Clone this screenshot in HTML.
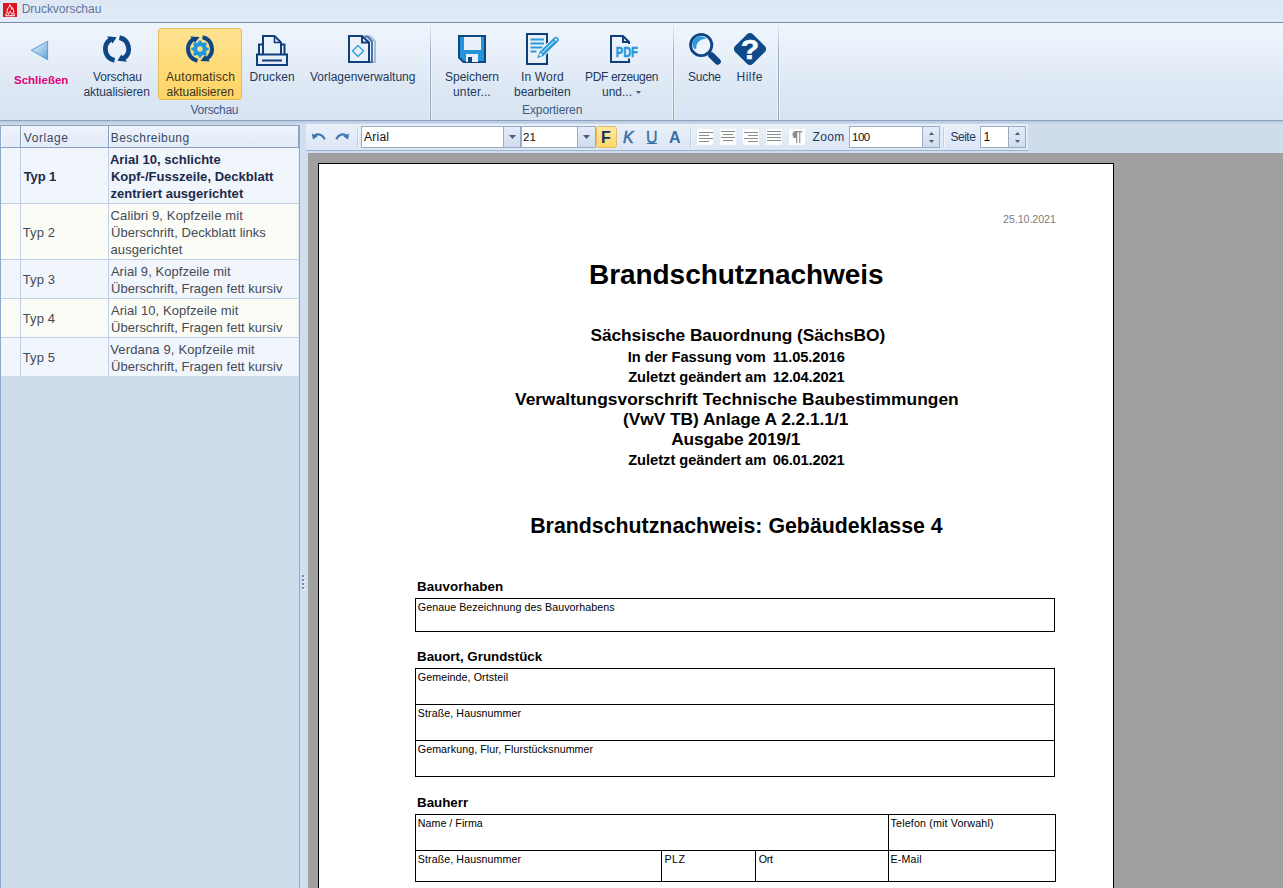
<!DOCTYPE html>
<html lang="de">
<head>
<meta charset="utf-8">
<title>Druckvorschau</title>
<style>
*{box-sizing:border-box;margin:0;padding:0}
html,body{width:1283px;height:888px;overflow:hidden}
body{position:relative;background:#cfdcec;font-family:"Liberation Sans",sans-serif;font-size:12px;color:#1e395b}
.abs{position:absolute}
.t{position:absolute;white-space:nowrap;line-height:1}
/* title bar */
#titlebar{left:0;top:0;width:1283px;height:22px;background:linear-gradient(#dee8f5,#e1ebf7)}
#titleline{left:0;top:22px;width:1283px;height:3px;background:linear-gradient(#768cab 0,#768cab 33.300%,#a9bbd4 33.300%,#a9bbd4 66.600%,#f4f9fe 66.600%)}
#apptitle{left:22px;top:2px;font-size:12.4px;color:#5d6f91;line-height:14px}
/* ribbon */
#ribbon{left:0;top:23px;width:1283px;height:97px;background:linear-gradient(#eff5fc 0,#e7eff9 35%,#dce7f4 70%,#d9e4f3 100%)}
#ribline{left:0;top:120px;width:1283px;height:1px;background:#8da2c0}
#ribshadow{left:0;top:121px;width:1283px;height:3px;background:linear-gradient(#b9c9de,#cbd9ea)}
.gsep{width:1px;top:25px;height:95px;background:linear-gradient(rgba(146,163,187,.15),rgba(146,163,187,.9) 30%,#92a3bb)}
.gsepl{width:3px;top:25px;height:95px;background:rgba(240,246,253,.8)}
.rl{position:absolute;text-align:center;white-space:nowrap;line-height:15px;font-size:12px;color:#1e395b}
.gl{position:absolute;text-align:center;white-space:nowrap;line-height:15px;font-size:12px;color:#3b5a82}
#btnauto{left:158px;top:28px;width:84px;height:72px;border:1px solid #e3bd5a;border-radius:3px;background:linear-gradient(#ffe391 0,#ffdc7c 45%,#ffd465 100%)}
/* left panel */
#grid{left:1px;top:125px;width:298px;height:252px;background:#c9d8ea}
.cell{position:absolute;overflow:hidden}
.hd{background:linear-gradient(#eef3fc,#e4ecf9);box-shadow:inset 1px 1px 0 #f6f9fe}
.r1{background:#f1f5fc}
.r2{background:#fcfcf7}
.gt{position:absolute;white-space:nowrap;line-height:17px;font-size:12px;color:#3c3c46}
/* toolbar */
#tbar{left:306px;top:124px;width:722px;height:27px;background:linear-gradient(#e9f0fa,#dbe6f5)}
#tbarline{left:306px;top:150px;width:722px;height:1px;background:#9db2d0}
#splitter{left:300px;top:124px;width:8px;height:764px;background:#d1deef}
#gray{left:308px;top:153px;width:975px;height:735px;background:#a0a0a0}
.inp{position:absolute;background:#fff;border:1px solid #9aabc4}
.dd{position:absolute;border:1px solid #9aabc4;background:linear-gradient(#e4ecf8,#d0dcee)}
.tsep{position:absolute;width:1px;top:127px;height:20px;background:#c3d0e4;box-shadow:1px 0 0 #f0f5fc}
.ico16{position:absolute;width:16px;height:16px;background:#fdfefe;top:129px}
/* page */
#page{left:318px;top:163px;width:796px;height:730px;background:#fff;border:1px solid #000}
.d{position:absolute;white-space:nowrap;color:#000;font-weight:bold;line-height:1}
.s{position:absolute;white-space:nowrap;color:#000;font-size:10.67px;line-height:1}
.box{position:absolute;border:1px solid #000}
.ln{position:absolute;background:#000}
</style>
</head>
<body>
<!-- TITLE BAR -->
<div class="abs" id="titlebar"></div>
<div class="abs" id="titleline"></div>
<svg class="abs" style="left:3px;top:3px" width="14" height="14" viewBox="0 0 14 14"><rect width="14" height="14" fill="#dc1220"/><path d="M6.700 1.400C7.500 3.400 3.900 5.200 3.900 8.200c0 1.500.8 2.600 2 3.100-.3-1.400.3-2.500 1.400-3.100.1 1.300 1.400 1.700 1.300 3.200 1.500-.6 2.300-2 2.100-3.600-.2-1.300-1.100-2-1-3.100-.7.400-1.100 1-1.100 1.800C8.400 5.100 8.200 2.800 6.700 1.400z" fill="none" stroke="#fff" stroke-width="1" stroke-linejoin="round"/><path d="M3 10.400v2.300h8.200v-2.300" fill="none" stroke="#fff" stroke-width="1.100"/></svg>

<!-- RIBBON -->
<div class="abs" id="ribbon"></div>
<div class="abs" id="ribline"></div>
<div class="abs" id="ribshadow"></div>
<div class="abs gsepl" style="left:429px"></div><div class="abs gsep" style="left:430px"></div><div class="abs gsepl" style="left:672px"></div><div class="abs gsep" style="left:673px"></div><div class="abs gsepl" style="left:777px"></div><div class="abs gsep" style="left:778px"></div>
<div class="abs" id="btnauto"></div>

<svg class="abs" style="left:24px;top:33px" width="32" height="32" viewBox="0 0 32 32"><defs><linearGradient id="tg" x1="0" y1="0" x2="1" y2="1"><stop offset="0" stop-color="#e3f0fb"/><stop offset=".5" stop-color="#a9cdee"/><stop offset="1" stop-color="#5f9fd8"/></linearGradient></defs><path d="M7.300 17.300 23.600 8.200V26.700z" fill="url(#tg)" stroke="#5c9ad3" stroke-width="1" stroke-linejoin="round"/></svg>
<svg class="abs" style="left:101px;top:33px" width="32" height="32" viewBox="0 0 32 32"><path d="M13.09 29.69A14 14 0 0 1 7.38 4.97L6.03 3.23L15.59 4.36L11.63 10.41L10.27 8.67A9.3 9.3 0 0 0 14.07 25.10zM18.91 2.31A14 14 0 0 1 24.62 27.03L25.97 28.77L16.41 27.64L20.37 21.59L21.73 23.33A9.3 9.3 0 0 0 17.93 6.90z" fill="#0e4583"/></svg>
<svg class="abs" style="left:184px;top:33px" width="32" height="32" viewBox="0 0 32 32"><path d="M13.09 29.69A14 14 0 0 1 7.38 4.97L6.21 3.47L15.58 4.06L11.07 9.70L9.90 8.20A9.9 9.9 0 0 0 13.94 25.68zM18.91 2.31A14 14 0 0 1 24.62 27.03L25.79 28.53L16.42 27.94L20.93 22.30L22.10 23.80A9.9 9.9 0 0 0 18.06 6.32z" fill="#0e4583"/><path d="M22.71 17.61L24.59 17.36L24.59 14.64L22.71 14.39L21.88 12.39L23.04 10.89L21.11 8.96L19.61 10.12L17.61 9.29L17.36 7.41L14.64 7.41L14.39 9.29L12.39 10.12L10.89 8.96L8.96 10.89L10.12 12.39L9.29 14.39L7.41 14.64L7.41 17.36L9.29 17.61L10.12 19.61L8.96 21.11L10.89 23.04L12.39 21.88L14.39 22.71L14.64 24.59L17.36 24.59L17.61 22.71L19.61 21.88L21.11 23.04L23.04 21.11L21.88 19.61zM18.7 16A2.7 2.7 0 1 0 13.3 16A2.7 2.7 0 1 0 18.7 16z" fill="#1f97dc" fill-rule="evenodd"/></svg>
<svg class="abs" style="left:256px;top:34px" width="32" height="32" viewBox="0 0 32 32"><path d="M7 20V2h11.500L25 8.500V20" fill="none" stroke="#0e3f7c" stroke-width="2"/><path d="M18.500 2v6.500h6.500" fill="none" stroke="#0e3f7c" stroke-width="1.600"/><path d="M3 20V10.500h4M28.500 20V10.500h-3.500" fill="none" stroke="#0e3f7c" stroke-width="2"/><rect x="1" y="20.500" width="30" height="10.500" fill="none" stroke="#0e3f7c" stroke-width="2"/><rect x="6" y="25.500" width="20" height="2" fill="#0e3f7c"/></svg>
<svg class="abs" style="left:348px;top:35px" width="29" height="29" viewBox="0 0 29 29"><path d="M19.500 1.500h3l4.500 5v20.500h-6" fill="none" stroke="#a9bcd8" stroke-width="2"/><path d="M16.500 1.500h3l4.500 5v20.500h-6" fill="none" stroke="#4d72a3" stroke-width="2"/><path d="M1 1h13l7 6.500V27H1z" fill="#eaf1fa" stroke="#0e3f7c" stroke-width="2"/><path d="M14 1v6.500h7" fill="none" stroke="#0e3f7c" stroke-width="2"/><path d="M10 10.500 15.500 16 10 21.500 4.500 16z" fill="none" stroke="#2aa0dc" stroke-width="1.400"/></svg>
<svg class="abs" style="left:458px;top:35px" width="28" height="28" viewBox="0 0 28 28"><path d="M1 1h26v26H5.500L1 22.500z" fill="#2493d8" stroke="#0e4583" stroke-width="2"/><rect x="6" y="2" width="17" height="13" fill="#e9f0fa"/><rect x="8" y="19" width="12" height="8" fill="#e9f0fa"/><rect x="10" y="22" width="4" height="5" fill="#0e4583"/></svg>
<svg class="abs" style="left:526px;top:33px" width="34" height="33" viewBox="0 0 34 33"><rect x="1" y="1" width="20" height="30" fill="#e9f0fa" stroke="#0e3f7c" stroke-width="2"/><path d="M4.500 6.500h13.500M4.500 10.500h13.500M4.500 14.500h12M4.500 18.500h6" stroke="#2a9bd8" stroke-width="1.800" fill="none"/><g transform="translate(10.300,26) rotate(-44.500)"><path d="M0 0 7 -3.300H27.500a3.300 3.300 0 0 1 0 6.600H7z" fill="#2a9bd8" stroke="#eaf1fa" stroke-width="1"/><path d="M8 -0.300H25" stroke="#b5dcf3" stroke-width="1.100"/><circle cx="6" cy="0" r="1.400" fill="#eaf1fa"/><circle cx="27.600" cy="0" r="1.300" fill="#eaf1fa"/></g></svg>
<svg class="abs" style="left:610px;top:35px" width="29" height="29" viewBox="0 0 29 29"><path d="M19 9V7L13 1H1v26h18v-3.500" fill="none" stroke="#0e3f7c" stroke-width="2"/><path d="M13 1v6h6" fill="none" stroke="#0e3f7c" stroke-width="2"/><text x="5.800" y="21.600" font-family="Liberation Sans,sans-serif" font-weight="bold" font-size="14" fill="#1f97dc" stroke="#1f97dc" stroke-width=".500" textLength="22" lengthAdjust="spacingAndGlyphs">PDF</text></svg>
<svg class="abs" style="left:689px;top:33px" width="33" height="33" viewBox="0 0 33 33"><circle cx="12.200" cy="12" r="10.600" fill="#eef3fb" stroke="#0e4583" stroke-width="2.800"/><path d="M5.300 16A7.400 7.400 0 0 1 17.300 6 8.800 8.800 0 0 0 7.300 15.400z" fill="#2a9bd8"/><path d="M22.300 22.300 28.600 28.600" stroke="#0e4583" stroke-width="6.400" stroke-linecap="round"/></svg>
<svg class="abs" style="left:734px;top:33px" width="32" height="32" viewBox="0 0 32 32"><rect x="3.400" y="3.400" width="25.200" height="25.200" rx="4.200" transform="rotate(45 16 16)" fill="#0e4a8a"/><text transform="translate(16.100 26.300) scale(1.120 1)" text-anchor="middle" font-family="Liberation Sans,sans-serif" font-weight="bold" font-size="27" fill="#fff" stroke="#fff" stroke-width=".500">?</text></svg>
<svg class="abs" style="left:636px;top:91px" width="5" height="3" viewBox="0 0 5 3"><path d="M0 0h5L2.500 3z" fill="#4b5b7d"/></svg>
<!-- LEFT GRID -->
<div class="abs" style="left:0;top:125px;width:300px;height:23px;background:#8a9fbf"></div>
<div class="abs" style="left:0;top:148px;width:299px;height:228px;background:#bfcfe7"></div>
<div class="abs" style="left:0;top:125px;width:1px;height:763px;background:#8fa7ca"></div>
<div class="abs" style="left:299px;top:125px;width:1px;height:763px;background:#8fa9cf"></div>
<div class="cell hd" style="left:1px;top:126px;width:19px;height:21px"></div>
<div class="cell hd" style="left:21px;top:126px;width:87px;height:21px"></div>
<div class="cell hd" style="left:109px;top:126px;width:189px;height:21px"></div>
<div class="abs" style="left:298px;top:148px;width:1px;height:228px;background:#dfe8f5"></div>
<div class="cell r1" style="left:1px;top:148px;width:19px;height:55px"></div>
<div class="cell r1" style="left:21px;top:148px;width:87px;height:55px"></div>
<div class="cell r1" style="left:109px;top:148px;width:189px;height:55px"></div>
<div class="cell r2" style="left:1px;top:204px;width:19px;height:55px"></div>
<div class="cell r2" style="left:21px;top:204px;width:87px;height:55px"></div>
<div class="cell r2" style="left:109px;top:204px;width:189px;height:55px"></div>
<div class="cell r1" style="left:1px;top:260px;width:19px;height:38px"></div>
<div class="cell r1" style="left:21px;top:260px;width:87px;height:38px"></div>
<div class="cell r1" style="left:109px;top:260px;width:189px;height:38px"></div>
<div class="cell r2" style="left:1px;top:299px;width:19px;height:38px"></div>
<div class="cell r2" style="left:21px;top:299px;width:87px;height:38px"></div>
<div class="cell r2" style="left:109px;top:299px;width:189px;height:38px"></div>
<div class="cell r1" style="left:1px;top:338px;width:19px;height:38px"></div>
<div class="cell r1" style="left:21px;top:338px;width:87px;height:38px"></div>
<div class="cell r1" style="left:109px;top:338px;width:189px;height:38px"></div>

<!-- TOOLBAR -->
<div class="abs" id="splitter"></div>
<div class="abs" style="left:303px;top:576px;width:2px;height:2px;background:#eef4fc"></div><div class="abs" style="left:302px;top:575px;width:2px;height:2px;background:#7a8db0"></div><div class="abs" style="left:303px;top:580px;width:2px;height:2px;background:#eef4fc"></div><div class="abs" style="left:302px;top:579px;width:2px;height:2px;background:#7a8db0"></div><div class="abs" style="left:303px;top:584px;width:2px;height:2px;background:#eef4fc"></div><div class="abs" style="left:302px;top:583px;width:2px;height:2px;background:#7a8db0"></div><div class="abs" style="left:303px;top:588px;width:2px;height:2px;background:#eef4fc"></div><div class="abs" style="left:302px;top:587px;width:2px;height:2px;background:#7a8db0"></div>
<div class="abs" id="tbar"></div>
<div class="abs" id="tbarline"></div>
<div class="tsep" style="left:357px"></div><div class="tsep" style="left:690px"></div><div class="tsep" style="left:943px"></div>
<div class="inp" style="left:361px;top:126px;width:160px;height:22px"></div>
<div class="dd" style="left:503px;top:126px;width:18px;height:22px"></div><svg class="abs" style="left:509px;top:135px" width="7" height="4" viewBox="0 0 7 4"><path d="M0 0h7L3.500 4z" fill="#4b5b7d"/></svg>
<div class="inp" style="left:521px;top:126px;width:75px;height:22px"></div>
<div class="dd" style="left:577px;top:126px;width:19px;height:22px"></div><svg class="abs" style="left:583px;top:135px" width="7" height="4" viewBox="0 0 7 4"><path d="M0 0h7L3.500 4z" fill="#4b5b7d"/></svg>
<div class="abs" style="left:596px;top:126px;width:21px;height:22px;border:1px solid #e3bd5a;border-radius:3px;background:linear-gradient(#ffe9a3,#ffd66b)"></div>
<div class="abs" style="left:647px;top:143px;width:10px;height:1px;background:#3a6ea5"></div>
<div class="ico16" style="left:697px"></div><div class="abs" style="left:699px;top:132px;width:14px;height:1px;background:#8c8c8c"></div><div class="abs" style="left:699px;top:135px;width:10px;height:1px;background:#8c8c8c"></div><div class="abs" style="left:699px;top:138px;width:14px;height:1px;background:#8c8c8c"></div><div class="abs" style="left:699px;top:141px;width:10px;height:1px;background:#8c8c8c"></div>
<div class="ico16" style="left:720px"></div><div class="abs" style="left:721px;top:131px;width:14px;height:1px;background:#8c8c8c"></div><div class="abs" style="left:723px;top:134px;width:10px;height:1px;background:#8c8c8c"></div><div class="abs" style="left:721px;top:137px;width:14px;height:1px;background:#8c8c8c"></div><div class="abs" style="left:723px;top:140px;width:10px;height:1px;background:#8c8c8c"></div>
<div class="ico16" style="left:743px"></div><div class="abs" style="left:744px;top:132px;width:14px;height:1px;background:#8c8c8c"></div><div class="abs" style="left:748px;top:135px;width:10px;height:1px;background:#8c8c8c"></div><div class="abs" style="left:744px;top:138px;width:14px;height:1px;background:#8c8c8c"></div><div class="abs" style="left:748px;top:141px;width:10px;height:1px;background:#8c8c8c"></div>
<div class="ico16" style="left:766px"></div><div class="abs" style="left:767px;top:131px;width:14px;height:1px;background:#8c8c8c"></div><div class="abs" style="left:767px;top:134px;width:14px;height:1px;background:#8c8c8c"></div><div class="abs" style="left:767px;top:137px;width:14px;height:1px;background:#8c8c8c"></div><div class="abs" style="left:767px;top:140px;width:14px;height:1px;background:#8c8c8c"></div>
<div class="ico16" style="left:789px"></div><svg class="abs" style="left:789px;top:129px" width="16" height="16" viewBox="0 0 16 16"><path d="M7 2H13.300V3.200H11.300V14H10.200V3.200H8.300V14H7.200V9.200A3.600 3.600 0 0 1 7 2z" fill="#8c8c8c"/></svg>
<div class="inp" style="left:849px;top:126px;width:91px;height:22px"></div>
<div class="dd" style="left:922px;top:126px;width:18px;height:22px"></div><svg class="abs" style="left:929px;top:132px" width="5" height="3" viewBox="0 0 5 3"><path d="M0 3h5L2.500 0z" fill="#4b5b7d"/></svg><svg class="abs" style="left:929px;top:140px" width="5" height="3" viewBox="0 0 5 3"><path d="M0 0h5L2.500 3z" fill="#4b5b7d"/></svg>
<div class="inp" style="left:980px;top:126px;width:46px;height:22px"></div>
<div class="dd" style="left:1008px;top:126px;width:18px;height:22px"></div><svg class="abs" style="left:1015px;top:132px" width="5" height="3" viewBox="0 0 5 3"><path d="M0 3h5L2.500 0z" fill="#4b5b7d"/></svg><svg class="abs" style="left:1015px;top:140px" width="5" height="3" viewBox="0 0 5 3"><path d="M0 0h5L2.500 3z" fill="#4b5b7d"/></svg>
<svg class="abs" style="left:311px;top:131px" width="16" height="11" viewBox="0 0 16 11"><path d="M0.800 2.400 1.900 8.400 6.600 5.600z" fill="#3f76ae"/><path d="M3.500 4.600C7.500 2.300 11.500 3.300 13.800 8.300" fill="none" stroke="#3f76ae" stroke-width="2.100"/></svg>
<svg class="abs" style="left:334px;top:131px" width="16" height="11" viewBox="0 0 16 11"><path d="M15.200 2.400 14.100 8.400 9.400 5.600z" fill="#3f76ae"/><path d="M12.500 4.600C8.500 2.300 4.500 3.300 2.200 8.300" fill="none" stroke="#3f76ae" stroke-width="2.100"/></svg>

<!-- PREVIEW -->
<div class="abs" id="gray"></div>
<div class="abs" id="page"></div>
<div class="ln" style="left:415px;top:598px;width:640px;height:1px"></div>
<div class="ln" style="left:415px;top:631px;width:640px;height:1px"></div>
<div class="ln" style="left:415px;top:598px;width:1px;height:34px"></div>
<div class="ln" style="left:1054px;top:598px;width:1px;height:34px"></div>
<div class="ln" style="left:415px;top:668px;width:640px;height:1px"></div>
<div class="ln" style="left:415px;top:704px;width:640px;height:1px"></div>
<div class="ln" style="left:415px;top:740px;width:640px;height:1px"></div>
<div class="ln" style="left:415px;top:776px;width:640px;height:1px"></div>
<div class="ln" style="left:415px;top:668px;width:1px;height:109px"></div>
<div class="ln" style="left:1054px;top:668px;width:1px;height:109px"></div>
<div class="ln" style="left:415px;top:814px;width:641px;height:1px"></div>
<div class="ln" style="left:415px;top:850px;width:641px;height:1px"></div>
<div class="ln" style="left:415px;top:881px;width:641px;height:1px"></div>
<div class="ln" style="left:415px;top:814px;width:1px;height:68px"></div>
<div class="ln" style="left:1055px;top:814px;width:1px;height:68px"></div>
<div class="ln" style="left:888px;top:814px;width:1px;height:68px"></div>
<div class="ln" style="left:661px;top:850px;width:1px;height:32px"></div>
<div class="ln" style="left:755px;top:850px;width:1px;height:32px"></div>
<div class="t" style="left:589px;top:261px;font-size:28px;color:#000;font-weight:bold;letter-spacing:-0.056px">Brandschutznachweis</div>
<div class="t" style="left:590.4px;top:327px;font-size:17.33px;color:#000;font-weight:bold;letter-spacing:-0.06px">Sächsische Bauordnung (SächsBO)</div>
<div class="t" style="left:627.7px;top:350px;font-size:14.67px;color:#000;font-weight:bold;letter-spacing:-0.024px">In der Fassung vom</div>
<div class="t" style="left:772.75px;top:350px;font-size:14.67px;color:#000;font-weight:bold;letter-spacing:-0.056px">11.05.2016</div>
<div class="t" style="left:628.2px;top:370px;font-size:14.67px;color:#000;font-weight:bold;letter-spacing:-0.022px">Zuletzt geändert am</div>
<div class="t" style="left:772.75px;top:370px;font-size:14.67px;color:#000;font-weight:bold;letter-spacing:-0.167px">12.04.2021</div>
<div class="t" style="left:515px;top:391px;font-size:17.33px;color:#000;font-weight:bold;letter-spacing:0.043px">Verwaltungsvorschrift Technische Baubestimmungen</div>
<div class="t" style="left:623px;top:411px;font-size:17.33px;color:#000;font-weight:bold;letter-spacing:-0.038px">(VwV TB) Anlage A 2.2.1.1/1</div>
<div class="t" style="left:671.2px;top:431px;font-size:17.33px;color:#000;font-weight:bold;letter-spacing:-0.139px">Ausgabe 2019/1</div>
<div class="t" style="left:628.2px;top:453px;font-size:14.67px;color:#000;font-weight:bold;letter-spacing:-0.022px">Zuletzt geändert am</div>
<div class="t" style="left:772.75px;top:453px;font-size:14.67px;color:#000;font-weight:bold;letter-spacing:-0.167px">06.01.2021</div>
<div class="t" style="left:530.2px;top:516px;font-size:21.33px;color:#000;font-weight:bold">Brandschutznachweis: Gebäudeklasse 4</div>
<div class="t" style="left:417px;top:580px;font-size:13.33px;color:#000;font-weight:bold;letter-spacing:0.1px">Bauvorhaben</div>
<div class="t" style="left:417px;top:650px;font-size:13.33px;color:#000;font-weight:bold">Bauort, Grundstück</div>
<div class="t" style="left:417px;top:796px;font-size:13.33px;color:#000;font-weight:bold">Bauherr</div>
<div class="t" style="left:417.8px;top:602px;font-size:10.67px;color:#000;letter-spacing:0.071px">Genaue Bezeichnung des Bauvorhabens</div>
<div class="t" style="left:417.8px;top:672px;font-size:10.67px;color:#000;letter-spacing:0.082px">Gemeinde, Ortsteil</div>
<div class="t" style="left:417.8px;top:708px;font-size:10.67px;color:#000;letter-spacing:0.083px">Straße, Hausnummer</div>
<div class="t" style="left:417.8px;top:744px;font-size:10.67px;color:#000;letter-spacing:0.075px">Gemarkung, Flur, Flurstücksnummer</div>
<div class="t" style="left:417.8px;top:818px;font-size:10.67px;color:#000;letter-spacing:0.037px">Name / Firma</div>
<div class="t" style="left:417.8px;top:854px;font-size:10.67px;color:#000;letter-spacing:0.083px">Straße, Hausnummer</div>
<div class="t" style="left:664.4px;top:854px;font-size:10.67px;color:#000;letter-spacing:0.6px">PLZ</div>
<div class="t" style="left:758.7px;top:854px;font-size:10.67px;color:#000;letter-spacing:-0.2px">Ort</div>
<div class="t" style="left:890.6px;top:818px;font-size:10.67px;color:#000;letter-spacing:0.17px">Telefon (mit Vorwahl)</div>
<div class="t" style="left:890.6px;top:854px;font-size:10.67px;color:#000;letter-spacing:0.16px">E-Mail</div>
<div class="t" style="left:1003px;top:214px;font-size:10.67px;color:#7d7d7d;letter-spacing:-0.045px">25.10.2021</div>
<div class="t" style="left:21.7px;top:3px;font-size:12px;color:#62749a;letter-spacing:-0.034px">Druckvorschau</div>
<div class="t" style="left:14px;top:75px;font-size:11.5px;color:#e2007a;font-weight:bold">Schließen</div>
<div class="t" style="left:93px;top:71px;font-size:12px;color:#1e395b;letter-spacing:-0.143px">Vorschau</div>
<div class="t" style="left:83.5px;top:86px;font-size:12px;color:#1e395b;letter-spacing:-0.083px">aktualisieren</div>
<div class="t" style="left:166px;top:71px;font-size:12px;color:#3a3320;letter-spacing:0.3px">Automatisch</div>
<div class="t" style="left:166.5px;top:86px;font-size:12px;color:#3a3320">aktualisieren</div>
<div class="t" style="left:249.6px;top:71px;font-size:12px;color:#1e395b;letter-spacing:0.05px">Drucken</div>
<div class="t" style="left:190.6px;top:104px;font-size:12px;color:#3e5a85;letter-spacing:-0.315px">Vorschau</div>
<div class="t" style="left:310px;top:71px;font-size:12px;color:#1e395b">Vorlagenverwaltung</div>
<div class="t" style="left:445px;top:71px;font-size:12px;color:#1e395b">Speichern</div>
<div class="t" style="left:453px;top:86px;font-size:12px;color:#1e395b;letter-spacing:0.143px">unter...</div>
<div class="t" style="left:521px;top:71px;font-size:12px;color:#1e395b;letter-spacing:0.167px">In Word</div>
<div class="t" style="left:514px;top:86px;font-size:12px;color:#1e395b">bearbeiten</div>
<div class="t" style="left:522px;top:104px;font-size:12px;color:#3e5a85;letter-spacing:-0.1px">Exportieren</div>
<div class="t" style="left:585px;top:71px;font-size:12px;color:#1e395b;letter-spacing:-0.364px">PDF erzeugen</div>
<div class="t" style="left:602px;top:86px;font-size:12px;color:#1e395b">und...</div>
<div class="t" style="left:688px;top:71px;font-size:12px;color:#1e395b;letter-spacing:-0.25px">Suche</div>
<div class="t" style="left:736.5px;top:71px;font-size:12px;color:#1e395b;letter-spacing:0.5px">Hilfe</div>
<div class="t" style="left:23.7px;top:132px;font-size:12px;color:#3b4a63;letter-spacing:0.6px">Vorlage</div>
<div class="t" style="left:110.75px;top:132px;font-size:12px;color:#3b4a63;letter-spacing:0.455px">Beschreibung</div>
<div class="t" style="left:23.75px;top:170px;font-size:13px;color:#1b2a4a;font-weight:bold;letter-spacing:-0.126px">Typ 1</div>
<div class="t" style="left:109.9px;top:153px;font-size:13px;color:#1b2a4a;font-weight:bold;letter-spacing:0.012px">Arial 10, schlichte</div>
<div class="t" style="left:110.9px;top:170px;font-size:13px;color:#1b2a4a;font-weight:bold;letter-spacing:0.028px">Kopf-/Fusszeile, Deckblatt</div>
<div class="t" style="left:110.5px;top:187px;font-size:13px;color:#1b2a4a;font-weight:bold;letter-spacing:0.024px">zentriert ausgerichtet</div>
<div class="t" style="left:22.75px;top:226px;font-size:13px;color:#444a55;letter-spacing:0.126px">Typ 2</div>
<div class="t" style="left:110.5px;top:209px;font-size:13px;color:#444a55;letter-spacing:0.13px">Calibri 9, Kopfzeile mit</div>
<div class="t" style="left:111.1px;top:226px;font-size:13px;color:#444a55;letter-spacing:0.029px">Überschrift, Deckblatt links</div>
<div class="t" style="left:110.5px;top:243px;font-size:13px;color:#444a55;letter-spacing:0.09px">ausgerichtet</div>
<div class="t" style="left:22.75px;top:273px;font-size:13px;color:#444a55;letter-spacing:0.126px">Typ 3</div>
<div class="t" style="left:110.9px;top:265px;font-size:13px;color:#444a55;letter-spacing:0.057px">Arial 9, Kopfzeile mit</div>
<div class="t" style="left:111.1px;top:282px;font-size:13px;color:#444a55;letter-spacing:0.027px">Überschrift, Fragen fett kursiv</div>
<div class="t" style="left:22.75px;top:312px;font-size:13px;color:#444a55;letter-spacing:0.126px">Typ 4</div>
<div class="t" style="left:110.9px;top:304px;font-size:13px;color:#444a55;letter-spacing:0.077px">Arial 10, Kopfzeile mit</div>
<div class="t" style="left:111.1px;top:321px;font-size:13px;color:#444a55;letter-spacing:0.027px">Überschrift, Fragen fett kursiv</div>
<div class="t" style="left:22.75px;top:351px;font-size:13px;color:#444a55;letter-spacing:0.126px">Typ 5</div>
<div class="t" style="left:110.2px;top:343px;font-size:13px;color:#444a55;letter-spacing:0.156px">Verdana 9, Kopfzeile mit</div>
<div class="t" style="left:111.1px;top:360px;font-size:13px;color:#444a55;letter-spacing:0.027px">Überschrift, Fragen fett kursiv</div>
<div class="t" style="left:364px;top:131px;font-size:12px;color:#111;letter-spacing:0.25px">Arial</div>
<div class="t" style="left:523px;top:132px;font-size:11.5px;color:#111">21</div>
<div class="t" style="left:601px;top:130px;font-size:16px;color:#10305c;font-weight:bold">F</div>
<div class="t" style="left:623px;top:130px;font-size:16px;color:#3a6ea5;font-style:italic;-webkit-text-stroke:.5px #3a6ea5">K</div>
<div class="t" style="left:646px;top:130px;font-size:16px;color:#3a6ea5;-webkit-text-stroke:.3px #3a6ea5">U</div>
<div class="t" style="left:669px;top:130px;font-size:16px;color:#3a6ea5;font-weight:bold">A</div>
<div class="t" style="left:812.5px;top:131px;font-size:12px;color:#1e395b;letter-spacing:0.333px">Zoom</div>
<div class="t" style="left:852px;top:132px;font-size:11.5px;color:#111;letter-spacing:-0.5px">100</div>
<div class="t" style="left:950.5px;top:131px;font-size:12px;color:#1e395b;letter-spacing:-0.5px">Seite</div>
<div class="t" style="left:983.4px;top:131px;font-size:12px;color:#111">1</div>
</body>
</html>
